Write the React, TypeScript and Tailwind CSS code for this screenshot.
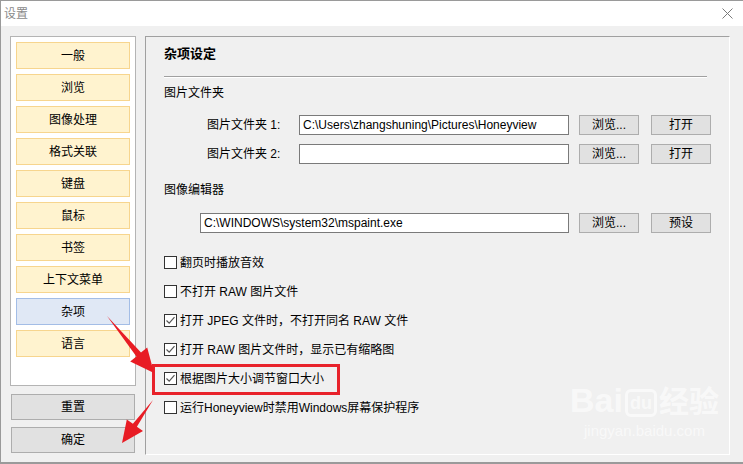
import React from "react";

const font = { fontFamily: '"Liberation Sans", "Noto Sans CJK SC", sans-serif' };

const navItems = ["一般", "浏览", "图像处理", "格式关联", "键盘", "鼠标", "书签", "上下文菜单", "杂项", "语言"];

function WinButton({ label, className = "" }: { label: string; className?: string }) {
  return (
    <div
      className={`flex h-[20px] w-[60px] shrink-0 items-center justify-center border border-[#adadad] bg-[#e1e1e1] text-[12px] text-black ${className}`}
    >
      {label}
    </div>
  );
}

function TextBox({ value, className = "" }: { value: string; className?: string }) {
  return (
    <div
      className={`flex h-[20px] shrink-0 items-center border border-[#7a7a7a] bg-white px-[3px] text-[12px] text-black ${className}`}
    >
      {value}
    </div>
  );
}

function Check({ checked, label }: { checked: boolean; label: string }) {
  return (
    <div className="flex h-[29px] items-center gap-[3px]">
      <div className="flex h-[13px] w-[13px] items-center justify-center border border-[#333] bg-white">
        {checked && (
          <svg width="11" height="11" viewBox="0 0 11 11">
            <path d="M1.5 5.5 L4.2 8.2 L9.5 2.2" fill="none" stroke="#555" strokeWidth="1.2" />
          </svg>
        )}
      </div>
      <span className="text-[12px] text-black">{label}</span>
    </div>
  );
}

export default function App() {
  return (
    <div className="relative h-[464px] w-[743px] overflow-hidden bg-[#f0f0f0]" style={font}>
      <div className="flex h-full w-full flex-col border-t border-l border-b-2 border-[#9a9a9a]">
        {/* title bar */}
        <div className="flex h-[25px] items-center justify-between bg-white pl-[3px] pr-[10px]">
          <span className="text-[12px] text-[#8a8a8a]">设置</span>
          <svg width="11" height="11" viewBox="0 0 11 11">
            <path d="M0.5 0.5 L10.5 10.5 M10.5 0.5 L0.5 10.5" stroke="#7a7a7a" strokeWidth="1" />
          </svg>
        </div>

        {/* body */}
        <div className="flex flex-1 gap-[9px] pl-[9px] pt-[10px]">
          {/* left column */}
          <div className="flex w-[126px] flex-col">
            <div className="flex h-[350px] flex-col gap-[5px] border border-[#b4b4b4] bg-white px-[5px] pt-[5px]">
              {navItems.map((n) => (
                <div
                  key={n}
                  className={`flex h-[27px] items-center justify-center border text-[12px] text-black ${
                    n === "杂项" ? "border-[#a3bde6] bg-[#e0e8f5]" : "border-[#f7d58e] bg-[#fff3cf]"
                  }`}
                >
                  {n}
                </div>
              ))}
            </div>
            <div className="mx-px mt-[8px] flex h-[26px] items-center justify-center border border-[#adadad] bg-[#e1e1e1] text-[12px] text-black">
              重置
            </div>
            <div className="mx-px mt-[7px] flex h-[26px] items-center justify-center border border-[#adadad] bg-[#e1e1e1] text-[12px] text-black">
              确定
            </div>
          </div>

          {/* right panel */}
          <div className="flex h-[419px] w-[585px] flex-col border-t border-l border-t-[#a0a0a0] border-l-[#a0a0a0] border-r border-b border-r-white border-b-white pl-[18px] pr-[16px]">
            <div className="mt-[8px] flex h-[18px] items-center text-[13px] font-bold text-black">杂项设定</div>
            <div className="mr-[6px] mt-[13px] h-[2px] border-t border-b border-t-[#a0a0a0] border-b-white" />
            <div className="mt-[6px] flex h-[18px] items-center text-[12px] text-black">图片文件夹</div>

            <div className="mt-[13px] flex items-center pl-[43px]">
              <span className="w-[92px] shrink-0 text-[12px] text-black">图片文件夹 1:</span>
              <TextBox value="C:\Users\zhangshuning\Pictures\Honeyview" className="w-[270px]" />
              <WinButton label="浏览..." className="ml-[10px]" />
              <WinButton label="打开" className="ml-[12px]" />
            </div>
            <div className="mt-[9px] flex items-center pl-[43px]">
              <span className="w-[92px] shrink-0 text-[12px] text-black">图片文件夹 2:</span>
              <TextBox value="" className="w-[270px]" />
              <WinButton label="浏览..." className="ml-[10px]" />
              <WinButton label="打开" className="ml-[12px]" />
            </div>

            <div className="mt-[17px] flex h-[18px] items-center text-[12px] text-black">图像编辑器</div>
            <div className="mt-[14px] flex items-center pl-[36px]">
              <TextBox value="C:\WINDOWS\system32\mspaint.exe" className="w-[369px]" />
              <WinButton label="浏览..." className="ml-[10px]" />
              <WinButton label="预设" className="ml-[12px]" />
            </div>

            <div className="mt-[15px] flex flex-col">
              <Check checked={false} label="翻页时播放音效" />
              <Check checked={false} label="不打开 RAW 图片文件" />
              <Check checked={true} label="打开 JPEG 文件时，不打开同名 RAW 文件" />
              <Check checked={true} label="打开 RAW 图片文件时，显示已有缩略图" />
              <Check checked={true} label="根据图片大小调节窗口大小" />
              <Check checked={false} label="运行Honeyview时禁用Windows屏幕保护程序" />
            </div>
          </div>
        </div>
      </div>

      {/* watermark */}
      <div className="pointer-events-none absolute left-[570px] top-[383px] flex flex-col items-center text-white/60">
        <div className="flex items-end gap-[2px] text-[34px] font-bold leading-none">
          <span>Bai</span>
          <span className="rounded-[6px] border-[3px] border-white/60 px-[2px] text-[18px] leading-[22px]">du</span>
          <span className="text-[30px]">经验</span>
        </div>
        <div className="mt-[6px] text-[15px] leading-none">jingyan.baidu.com</div>
      </div>

      {/* annotation: red box */}
      <div className="pointer-events-none absolute left-[152px] top-[364px] h-[31px] w-[188px] border-[3px] border-[#e8222b]" />

      {/* annotation: arrows */}
      <svg className="pointer-events-none absolute left-0 top-0" width="743" height="464" viewBox="0 0 743 464">
        <polygon
          points="107,316 141,352.6 147.2,347.5 154,373 130.2,361.5 136.4,356.4"
          fill="#e81c24"
        />
        <polygon
          points="153,400 136.9,426.7 143,431 122,443 126.8,419.4 132.9,423.7"
          fill="#e81c24"
        />
      </svg>
    </div>
  );
}
